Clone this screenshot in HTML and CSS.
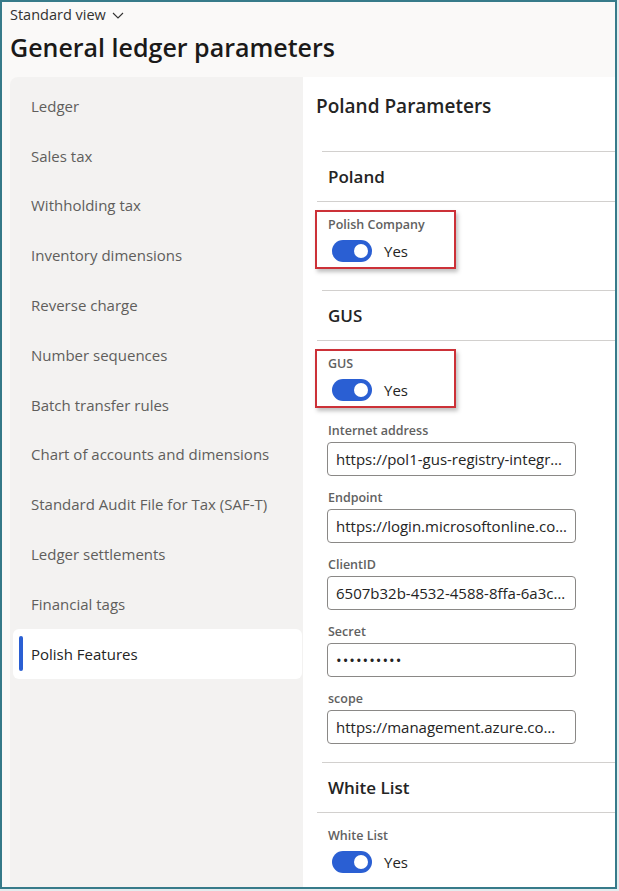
FILE: index.html
```html
<!DOCTYPE html>
<html lang="en">
<head>
    <meta charset="UTF-8">
    <meta name="viewport" content="width=device-width, initial-scale=1.0">
    <title>General ledger parameters</title>
    <link rel="stylesheet" href="styles.css">
</head>
<body>
    <div class="frame">
        <header class="page-head">
            <div class="view-picker">Standard view
                <svg width="12" height="7" viewBox="0 0 12 7"><path d="M1 1l5 5 5-5" fill="none" stroke="#333" stroke-width="1.1"/></svg>
            </div>
            <h1>General ledger parameters</h1>
        </header>

        <div class="workspace">
            <nav class="tabs">
                <div class="tab">Ledger</div>
                <div class="tab">Sales tax</div>
                <div class="tab">Withholding tax</div>
                <div class="tab">Inventory dimensions</div>
                <div class="tab">Reverse charge</div>
                <div class="tab">Number sequences</div>
                <div class="tab">Batch transfer rules</div>
                <div class="tab">Chart of accounts and dimensions</div>
                <div class="tab">Standard Audit File for Tax (SAF-T)</div>
                <div class="tab">Ledger settlements</div>
                <div class="tab">Financial tags</div>
                <div class="tab active">Polish Features</div>
            </nav>

            <main class="panel">
                <h2 class="panel-title">Poland Parameters</h2>
                <div class="divider"></div>

                <h3 class="group-title">Poland</h3>
                <div class="group-body">
                    <div class="field marked">
                        <label>Polish Company</label>
                        <div class="toggle-row"><span class="toggle"></span><span>Yes</span></div>
                    </div>
                </div>
                <div class="divider"></div>

                <h3 class="group-title">GUS</h3>
                <div class="group-body tight">
                    <div class="field marked">
                        <label>GUS</label>
                        <div class="toggle-row"><span class="toggle"></span><span>Yes</span></div>
                    </div>
                    <div class="field spaced">
                        <label>Internet address</label>
                        <input class="text-input" type="text" readonly value="https://pol1-gus-registry-integration.azurewebsites.net">
                    </div>
                    <div class="field">
                        <label>Endpoint</label>
                        <input class="text-input" type="text" readonly value="https://login.microsoftonline.com/common/oauth2">
                    </div>
                    <div class="field">
                        <label>ClientID</label>
                        <input class="text-input" type="text" readonly value="6507b32b-4532-4588-8ffa-6a3c1d2e9f10">
                    </div>
                    <div class="field">
                        <label>Secret</label>
                        <input class="text-input secret" type="password" readonly value="1234567890">
                    </div>
                    <div class="field">
                        <label>scope</label>
                        <input class="text-input" type="text" readonly value="https://management.azure.com/.default">
                    </div>
                </div>
                <div class="divider"></div>

                <h3 class="group-title">White List</h3>
                <div class="group-body">
                    <div class="field">
                        <label>White List</label>
                        <div class="toggle-row"><span class="toggle"></span><span>Yes</span></div>
                    </div>
                </div>
            </main>
        </div>
    </div>
</body>
</html>
```

FILE: styles.css
```css
body {
    margin: 0;
    background: #e4ecee;
    font-family: "Open Sans", "Noto Sans", sans-serif;
    color: #242424;
}

.frame {
    width: 617px;
    height: 889px;
    box-sizing: border-box;
    border: 2px solid #377b8a;
    background: #faf9f8;
    display: flex;
    flex-direction: column;
    overflow: hidden;
}

.page-head {
    height: 75px;
    padding-left: 8px;
    box-sizing: border-box;
}

.view-picker {
    margin-top: 3px;
    height: 20px;
    line-height: 20px;
    font-size: 14.5px;
    color: #323130;
    display: flex;
    align-items: center;
    gap: 6px;
}

.page-head h1 {
    margin: 6px 0 0;
    font-size: 25px;
    line-height: 32px;
    font-weight: 600;
    color: #1b1a19;
}

.workspace {
    flex: 1;
    display: flex;
    margin-left: 8px;
    min-height: 0;
}

.tabs {
    width: 293px;
    background: #f3f2f1;
    border-top-left-radius: 8px;
    padding-top: 4px;
}

.tab {
    height: 49.8px;
    display: flex;
    align-items: center;
    padding-left: 21px;
    font-size: 15px;
    color: #605e5c;
}

.tab.active {
    background: #fff;
    margin: 0 1px 0 3px;
    padding-left: 6px;
    border-radius: 6px;
    color: #242424;
}

.tab.active::before {
    content: "";
    width: 4px;
    height: 35px;
    border-radius: 2px;
    background: #2a5fd3;
    margin-right: 8px;
}

.panel {
    flex: 1;
    background: #fff;
}

.panel-title {
    margin: 0;
    padding: 16px 0 32px 13px;
    font-size: 19px;
    line-height: 26px;
    font-weight: 600;
}

.divider {
    height: 1px;
    background: #d2d0ce;
    margin-left: 19px;
}

.group-title {
    margin: 0 0 0 14px;
    padding: 13px 0 12px 11px;
    font-size: 17px;
    line-height: 24px;
    font-weight: 600;
    border-bottom: 1px solid #d2d0ce;
}

.group-body {
    padding: 8px 0 21px 12px;
}

.group-body.tight {
    padding-bottom: 11px;
}

.field {
    width: 260px;
    border: 2px solid transparent;
    padding: 5px 11px;
}

.field.marked {
    width: 115px;
    border-color: #cc3138;
    box-shadow: 2px 3px 4px rgba(0, 0, 0, 0.25);
}

.field.spaced {
    margin-top: 8px;
}

.field label {
    display: block;
    font-size: 12.5px;
    line-height: 16px;
    font-weight: 600;
    color: #616161;
}

.toggle-row {
    margin-top: 7px;
    display: flex;
    align-items: center;
    font-size: 15px;
    color: #242424;
}

.toggle {
    width: 40px;
    height: 22px;
    margin-left: 4px;
    margin-right: 12px;
    border-radius: 11px;
    background: #2a5fd3;
    display: flex;
    align-items: center;
    justify-content: flex-end;
    padding-right: 4px;
    box-sizing: border-box;
}

.toggle::after {
    content: "";
    width: 14px;
    height: 14px;
    border-radius: 50%;
    background: #fff;
}

.text-input {
    display: block;
    margin-top: 3px;
    width: 249px;
    height: 34px;
    box-sizing: border-box;
    margin-left: -1px;
    border: 1px solid #8a8886;
    border-radius: 4px;
    padding: 0 8px;
    font-family: inherit;
    font-size: 15px;
    color: #242424;
    text-overflow: ellipsis;
    outline: none;
}

.text-input.secret {
    letter-spacing: 1px;
}
```
